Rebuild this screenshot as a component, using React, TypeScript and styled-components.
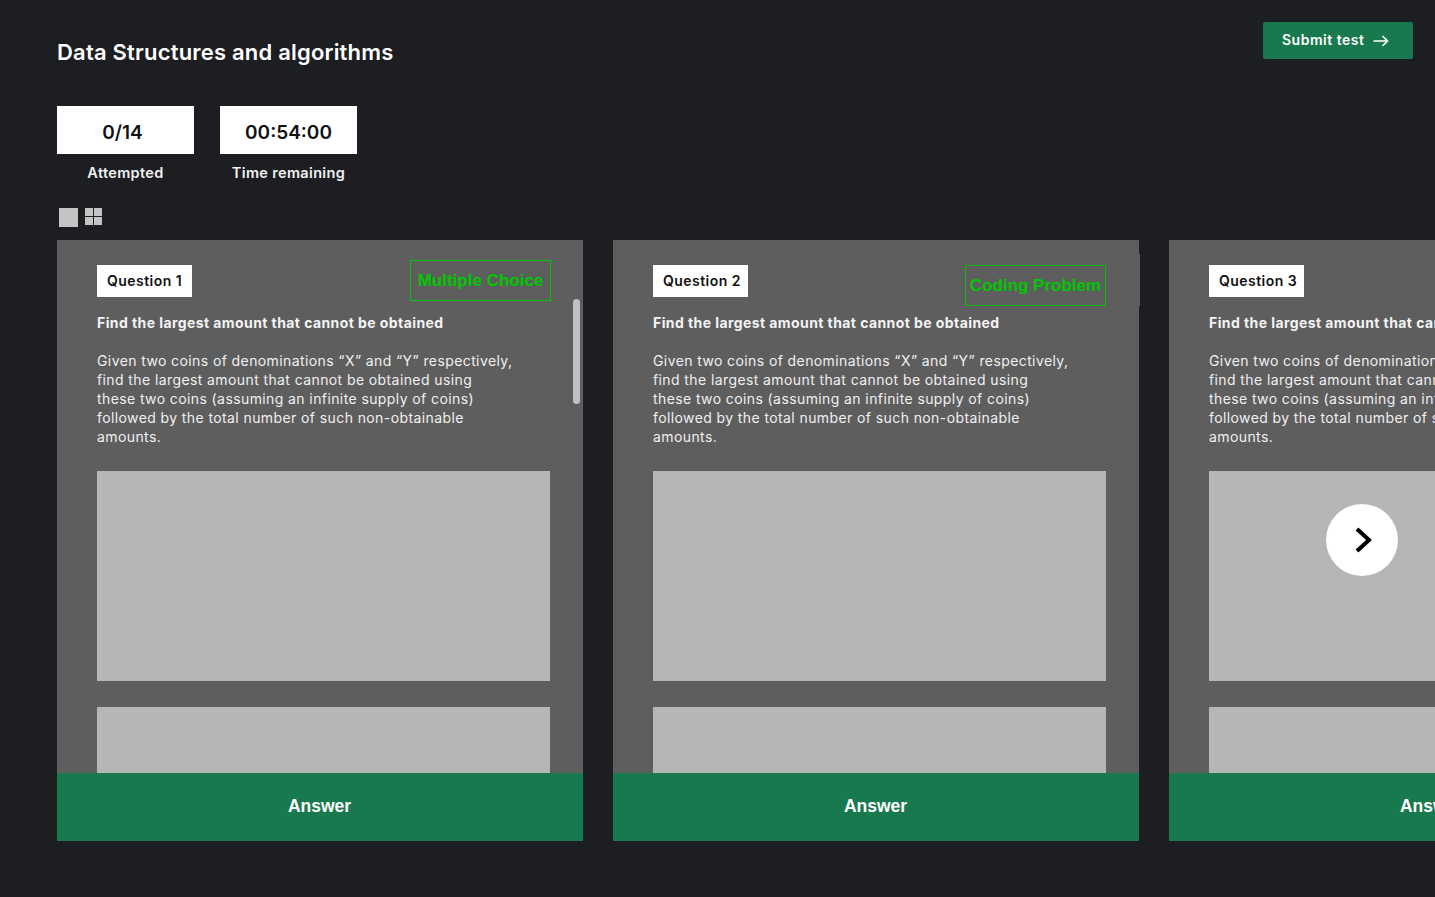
import React from 'react';
import styled, { createGlobalStyle } from 'styled-components';

const GlobalStyle = createGlobalStyle`
  html, body {
    margin: 0;
    padding: 0;
    background: #1d1e22;
  }
  * {
    box-sizing: border-box;
  }
`;

const questionText = [
  'Given two coins of denominations “X” and “Y” respectively,',
  'find the largest amount that cannot be obtained using',
  'these two coins (assuming an infinite supply of coins)',
  'followed by the total number of such non-obtainable',
  'amounts.',
];

const questions = [
  { id: 1, tag: 'Multiple Choice', tagTop: 20, tagLeft: 353, tagBorder: '#00c800', scrollbar: true },
  { id: 2, tag: 'Coding Problem', tagTop: 25, tagLeft: 352, tagBorder: '#10b810', scrollbar: false },
  { id: 3, tag: '', tagTop: 0, tagLeft: 0, tagBorder: '', scrollbar: false },
];

const App: React.FC = () => {
  return (
    <Page>
      <GlobalStyle />
      <Header>
        <Title>Data Structures and algorithms</Title>
        <SubmitButton>
          Submit test
          <svg width="16" height="12" viewBox="0 0 16 12" fill="none" stroke="#fff" strokeWidth="1.6" aria-hidden="true">
            <path d="M0.5 6H14.5M9.5 1l5 5-5 5" />
          </svg>
        </SubmitButton>
      </Header>

      <Stats>
        <Stat>
          <StatBox $inset={6}>0/14</StatBox>
          <StatLabel>Attempted</StatLabel>
        </Stat>
        <Stat>
          <StatBox $inset={0}>00:54:00</StatBox>
          <StatLabel>Time remaining</StatLabel>
        </Stat>
      </Stats>

      <ViewToggle>
        <SingleView />
        <GridView>
          <i />
          <i />
          <i />
          <i />
        </GridView>
      </ViewToggle>

      <Track>
        {questions.map((q) => (
          <Card key={q.id}>
            <CardBody>
              <QuestionLabel>Question {q.id}</QuestionLabel>
              <Heading>Find the largest amount that cannot be obtained</Heading>
              <Description>
                {questionText.map((line) => (
                  <span key={line}>{line}</span>
                ))}
              </Description>
              <Placeholder $height={210} />
              <Placeholder $height={210} />
            </CardBody>
            {q.tag && (
              <TypeTag $top={q.tagTop} $left={q.tagLeft} $border={q.tagBorder}>
                {q.tag}
              </TypeTag>
            )}
            {q.scrollbar && <Scrollbar />}
            {q.id === 2 && <EdgeNotch />}
            <AnswerBar>Answer</AnswerBar>
          </Card>
        ))}
      </Track>

      <NextButton aria-label="Next">
        <svg width="18" height="26" viewBox="0 0 18 26" fill="none" stroke="#000" strokeWidth="4" aria-hidden="true">
          <path d="M3 2l12 11L3 24" />
        </svg>
      </NextButton>
    </Page>
  );
};

const Page = styled.div`
  position: relative;
  width: 100%;
  height: 897px;
  overflow: hidden;
  padding: 22px 0 0 57px;
  background: #1d1e22;
  font-family: Inter, 'Noto Sans', sans-serif;
  color: #fff;
`;

const Header = styled.header`
  display: flex;
  justify-content: space-between;
  align-items: flex-start;
  padding-right: 22px;
  height: 84px;
`;

const Title = styled.h1`
  margin: 15px 0 0;
  font-size: 22px;
  line-height: 30px;
  font-weight: 600;
  letter-spacing: 0.2px;
`;

const SubmitButton = styled.button`
  display: flex;
  align-items: center;
  gap: 9px;
  width: 150px;
  height: 37px;
  padding: 0 0 2px 19px;
  border: 0;
  border-radius: 2px;
  background: #18794e;
  color: #fff;
  font-family: inherit;
  font-size: 14px;
  font-weight: 600;
  letter-spacing: 0.5px;

  svg {
    margin-top: 2px;
  }
`;

const Stats = styled.div`
  display: flex;
  gap: 26px;
`;

const Stat = styled.div`
  width: 137px;
  text-align: center;
`;

const StatBox = styled.div<{ $inset: number }>`
  height: 48px;
  padding-right: ${(p) => p.$inset}px;
  background: #fff;
  color: #111;
  font-size: 19px;
  font-weight: 600;
  line-height: 54px;
`;

const StatLabel = styled.div`
  margin-top: 9px;
  font-size: 14.5px;
  line-height: 20px;
  font-weight: 600;
  letter-spacing: 0.35px;
  color: #f2f2f2;
`;

const ViewToggle = styled.div`
  display: flex;
  gap: 7px;
  margin: 25px 0 0 2px;
  height: 32px;
`;

const SingleView = styled.div`
  width: 19px;
  height: 19px;
  background: #c4c4c4;
`;

const GridView = styled.div`
  display: grid;
  grid-template-columns: 8px 8px;
  grid-auto-rows: 8px;
  gap: 1px;
  width: 17px;
  height: 17px;

  i {
    display: block;
    background: #c4c4c4;
  }
`;

const Track = styled.div`
  display: flex;
  gap: 30px;
  width: max-content;
`;

const Card = styled.article`
  position: relative;
  width: 526px;
  height: 601px;
  display: flex;
  flex-direction: column;
  background: #5e5e5e;
`;

const CardBody = styled.div`
  flex: 1;
  min-height: 0;
  overflow: hidden;
  padding: 25px 33px 0 40px;
`;

const QuestionLabel = styled.div`
  width: 95px;
  height: 32px;
  padding-left: 10px;
  background: #fff;
  color: #111;
  font-size: 14px;
  font-weight: 600;
  letter-spacing: 0.45px;
  line-height: 32px;
  white-space: nowrap;
`;

const Heading = styled.h2`
  margin: 16px 0 0;
  font-size: 14px;
  line-height: 20px;
  font-weight: 700;
  letter-spacing: 0.42px;
  color: #f4f4f4;
`;

const Description = styled.p`
  margin: 18px 0 25px;
  font-size: 14px;
  line-height: 19px;
  font-weight: 400;
  letter-spacing: 0.4px;
  color: #f0f0f0;

  span {
    display: block;
    white-space: nowrap;
  }
`;

const Placeholder = styled.div<{ $height: number }>`
  height: ${(p) => p.$height}px;
  margin-bottom: 26px;
  background: #b6b6b6;
`;

const TypeTag = styled.div<{ $top: number; $left: number; $border: string }>`
  position: absolute;
  top: ${(p) => p.$top}px;
  left: ${(p) => p.$left}px;
  width: 141px;
  height: 41px;
  border: 1px solid ${(p) => p.$border};
  color: #00c800;
  font-family: 'Liberation Sans', Arial, sans-serif;
  font-size: 17px;
  font-weight: 700;
  line-height: 39px;
  text-align: center;
  white-space: nowrap;
`;

const Scrollbar = styled.div`
  position: absolute;
  top: 59px;
  left: 516px;
  width: 7px;
  height: 105px;
  border-radius: 4px;
  background: #c0c0c0;
`;

const EdgeNotch = styled.div`
  position: absolute;
  top: 14px;
  right: -1px;
  width: 1px;
  height: 52px;
  background: #5e5e5e;
`;

const AnswerBar = styled.button`
  flex: none;
  height: 68px;
  padding: 0 1px 2px 0;
  border: 0;
  background: #18794e;
  color: #fff;
  font-family: 'Liberation Sans', Arial, sans-serif;
  font-size: 17.5px;
  font-weight: 700;
`;

const NextButton = styled.button`
  position: absolute;
  top: 504px;
  left: 1326px;
  display: flex;
  align-items: center;
  justify-content: center;
  width: 72px;
  height: 72px;
  padding: 0 0 0 2px;
  border: 0;
  border-radius: 50%;
  background: #fff;
`;

export default App;
